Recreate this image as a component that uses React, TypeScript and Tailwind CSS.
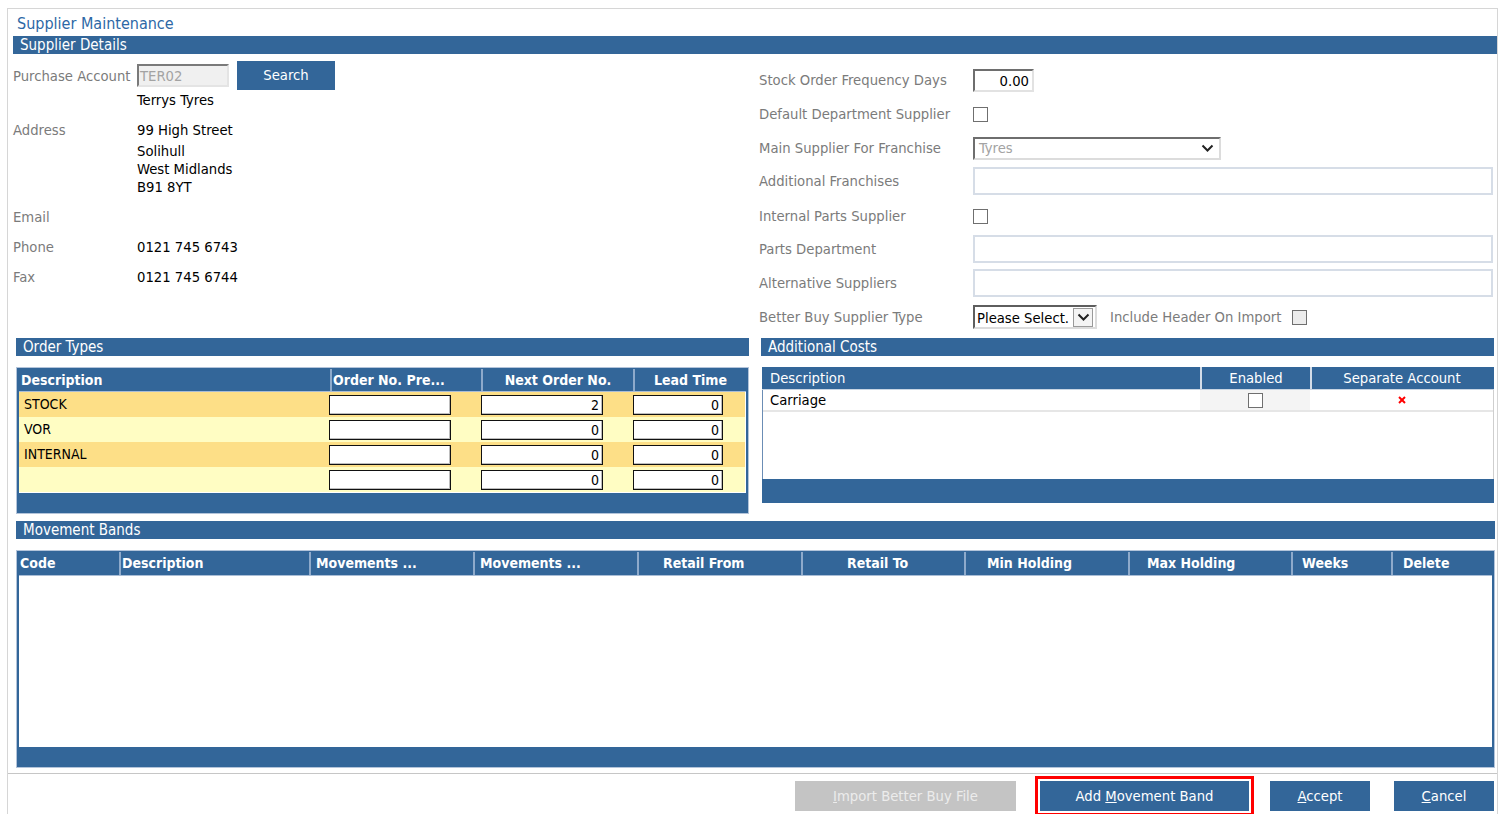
import React from 'react';

const FONT = "font-['DejaVu_Sans_Condensed','Liberation_Sans',sans-serif]";

function Bar({ title }: { title: string }) {
  return (
    <div className="h-[18px] bg-[#336699] text-white text-[15px] leading-[19px] pl-[7px]">{title}</div>
  );
}

function Checkbox({ grey = false }: { grey?: boolean }) {
  return (
    <span
      className={`inline-block w-[15px] h-[15px] border border-[#6f6f6f] ${grey ? 'bg-[#ececec]' : 'bg-white'}`}
    />
  );
}

function Chevron() {
  return (
    <svg width="13" height="9" viewBox="0 0 13 9">
      <polyline points="1.5,1.5 6.5,6.5 11.5,1.5" fill="none" stroke="#222" strokeWidth="2" />
    </svg>
  );
}

function WideBox() {
  return <div className="w-[520px] h-[28px] border-2 border-[#d6dde7] bg-white" />;
}

function RightRow({ label, h, mt, children }: { label: string; h: number; mt: number; children?: React.ReactNode }) {
  return (
    <div className="flex items-center" style={{ height: h, marginTop: mt }}>
      <div className="w-[214px] text-[#7b7b7b]">{label}</div>
      {children}
    </div>
  );
}

function CellInput({ value, w, ml = 0 }: { value: string; w: number; ml?: number }) {
  return (
    <div
      className="h-[20px] bg-white border border-[#111] shadow-[inset_-1px_-1px_0_#bdbdbd] text-right pr-[3px] leading-[18px] text-[14px]"
      style={{ width: w, marginLeft: ml }}
    >
      {value}
    </div>
  );
}

const orderRows = [
  { name: 'STOCK', next: '2', lead: '0', bg: 'bg-[#fddf87]' },
  { name: 'VOR', next: '0', lead: '0', bg: 'bg-[#fffdc3]' },
  { name: 'INTERNAL', next: '0', lead: '0', bg: 'bg-[#fddf87]' },
  { name: '', next: '0', lead: '0', bg: 'bg-[#fffdc3]' },
];

const bandCols = [
  { label: 'Code', w: 100, pl: 1 },
  { label: 'Description', w: 190, pl: 1 },
  { label: 'Movements ...', w: 164, pl: 5 },
  { label: 'Movements ...', w: 164, pl: 5 },
  { label: 'Retail From', w: 164, pl: 24 },
  { label: 'Retail To', w: 163, pl: 44 },
  { label: 'Min Holding', w: 164, pl: 21 },
  { label: 'Max Holding', w: 163, pl: 17 },
  { label: 'Weeks', w: 100, pl: 9 },
  { label: 'Delete', w: 100, pl: 10 },
];

function FirstUnderlined({ text, idx = 0 }: { text: string; idx?: number }) {
  return (
    <>
      {text.slice(0, idx)}
      <span className="underline">{text[idx]}</span>
      {text.slice(idx + 1)}
    </>
  );
}

export default function App() {
  return (
    <div className={`w-[1501px] h-[814px] bg-white pt-[8px] pl-[7px] pr-[3px] overflow-hidden text-[14.7px] text-black ${FONT}`}>
      <div className="h-full border-l border-t border-r border-[#d6d6d6]">
        {/* Title */}
        <div className="h-[27px] flex items-center pt-[2px] pl-[9px] text-[16px] text-[#2d68a6]">Supplier Maintenance</div>

        <div className="pl-[5px]">
          <Bar title="Supplier Details" />

          {/* Supplier details */}
          <div className="h-[284px] flex">
            <div className="w-[746px]">
              <div className="flex items-center h-[29px] mt-[7px]">
                <div className="w-[124px] text-[#7b7b7b] pt-[2px]">Purchase Account</div>
                <div className="w-[92px] h-[23px] bg-[#f0f0f0] border-2 border-t-[#7a7a7a] border-l-[#7a7a7a] border-b-[#e4e4e4] border-r-[#e4e4e4] text-[#a3a3a3] leading-[19px] pl-[1px]">
                  TER02
                </div>
                <button className="ml-[8px] w-[98px] h-[29px] bg-[#336699] text-white">Search</button>
              </div>
              <div className="h-[20px] leading-[20px] pl-[124px]">Terrys Tyres</div>
              <div className="flex mt-[10px]">
                <div className="w-[124px] h-[20px] leading-[20px] text-[#7b7b7b]">Address</div>
                <div>
                  <div className="h-[20px] leading-[20px]">99 High Street</div>
                  <div className="h-[18px] leading-[18px] mt-[2px]">Solihull</div>
                  <div className="h-[18px] leading-[18px]">West Midlands</div>
                  <div className="h-[18px] leading-[18px]">B91 8YT</div>
                </div>
              </div>
              <div className="flex h-[20px] leading-[20px] mt-[11px]">
                <div className="w-[124px] text-[#7b7b7b]">Email</div>
              </div>
              <div className="flex h-[20px] leading-[20px] mt-[10px]">
                <div className="w-[124px] text-[#7b7b7b]">Phone</div>
                <div>0121 745 6743</div>
              </div>
              <div className="flex h-[20px] leading-[20px] mt-[10px]">
                <div className="w-[124px] text-[#7b7b7b]">Fax</div>
                <div>0121 745 6744</div>
              </div>
            </div>

            <div className="flex-1">
              <RightRow label="Stock Order Frequency Days" h={25} mt={14}>
                <div className="w-[61px] h-[23px] bg-white border-2 border-t-[#6e6e6e] border-l-[#6e6e6e] border-b-[#e2e2e2] border-r-[#e2e2e2] text-right pr-[3px] leading-[19px]">
                  0.00
                </div>
              </RightRow>
              <RightRow label="Default Department Supplier" h={20} mt={11}>
                <Checkbox />
              </RightRow>
              <RightRow label="Main Supplier For Franchise" h={25} mt={12}>
                <div className="w-[248px] h-[23px] bg-white border-2 border-t-[#6e6e6e] border-l-[#6e6e6e] border-b-[#dcdcdc] border-r-[#dcdcdc] flex items-center justify-between pl-[4px] pr-[5px] text-[#a3a3a3]">
                  <span>Tyres</span>
                  <Chevron />
                </div>
              </RightRow>
              <RightRow label="Additional Franchises" h={28} mt={6}>
                <WideBox />
              </RightRow>
              <RightRow label="Internal Parts Supplier" h={20} mt={11}>
                <Checkbox />
              </RightRow>
              <RightRow label="Parts Department" h={28} mt={9}>
                <WideBox />
              </RightRow>
              <RightRow label="Alternative Suppliers" h={28} mt={6}>
                <WideBox />
              </RightRow>
              <RightRow label="Better Buy Supplier Type" h={26} mt={7}>
                <div className="w-[124px] h-[24px] bg-white border-2 border-t-[#5e5e5e] border-l-[#5e5e5e] border-b-[#dcdcdc] border-r-[#dcdcdc] flex items-center pl-[2px] pr-[2px]">
                  <span className="flex-1 whitespace-nowrap overflow-hidden pt-[2px]">Please Select.</span>
                  <span className="w-[20px] h-[19px] border border-[#9a9a9a] bg-[#f4f4f4] flex items-center justify-center">
                    <Chevron />
                  </span>
                </div>
                <span className="ml-[13px] text-[#7b7b7b]">Include Header On Import</span>
                <span className="ml-[11px] flex items-center">
                  <Checkbox grey />
                </span>
              </RightRow>
            </div>
          </div>
        </div>

        {/* Order types / additional costs */}
        <div className="pl-[8px] flex gap-[12px]">
          <div className="w-[733px]">
            <Bar title="Order Types" />
            <div className="mt-[11px] border border-[#b3c4da] bg-[#336699] px-[2px] pt-[1px]">
              <div className="flex h-[23px] border-b border-[#a9bdd6] text-white font-bold text-[14px]">
                <div className="w-[311px] pl-[2px] leading-[22px]">Description</div>
                <div className="w-[151px] pl-[1px] border-l-2 border-[#8eaacb] leading-[22px] whitespace-nowrap overflow-hidden">Order No. Pre...</div>
                <div className="w-[152px] border-l-2 border-[#8eaacb] leading-[22px] text-center">Next Order No.</div>
                <div className="w-[113px] border-l-2 border-[#8eaacb] leading-[22px] text-center">Lead Time</div>
              </div>
              <div className="bg-white pr-[1px] pb-[1px]">
                {orderRows.map((r, i) => (
                  <div key={i} className={`flex items-center h-[25px] ${r.bg}`}>
                    <div className="w-[310px] pl-[5px] text-[14px]">{r.name}</div>
                    <div className="w-[151px]">
                      <CellInput value="" w={122} />
                    </div>
                    <div className="w-[152px]">
                      <CellInput value={r.next} w={122} ml={1} />
                    </div>
                    <div className="w-[113px]">
                      <CellInput value={r.lead} w={90} ml={1} />
                    </div>
                  </div>
                ))}
              </div>
              <div className="h-[20px]" />
            </div>
          </div>

          <div className="w-[733px]">
            <Bar title="Additional Costs" />
            <div className="mt-[11px] ml-[1px] w-[732px]">
              <div className="flex h-[23px] bg-[#336699] text-white border-b border-[#c9d5e3]">
                <div className="w-[438px] pl-[8px] leading-[22px]">Description</div>
                <div className="w-[110px] border-l-2 border-[#d3dce8] text-center leading-[22px]">Enabled</div>
                <div className="w-[182px] border-l-2 border-[#d3dce8] text-center leading-[22px]">Separate Account</div>
              </div>
              <div className="h-[89px] bg-white border-l border-[#6b8db5] border-r border-r-[#cfcfcf]">
                <div className="flex h-[22px] border-b-2 border-[#e6e6e6]">
                  <div className="w-[437px] pl-[7px] leading-[20px]">Carriage</div>
                  <div className="w-[110px] bg-[#f4f4f4] flex items-center justify-center">
                    <Checkbox />
                  </div>
                  <div className="w-[183px] flex items-center justify-center">
                    <svg width="8" height="8" viewBox="0 0 8 8">
                      <line x1="1" y1="1" x2="7" y2="7" stroke="#ff0000" strokeWidth="2" />
                      <line x1="7" y1="1" x2="1" y2="7" stroke="#ff0000" strokeWidth="2" />
                    </svg>
                  </div>
                </div>
              </div>
              <div className="h-[24px] bg-[#336699]" />
            </div>
          </div>
        </div>

        {/* Movement bands */}
        <div className="pl-[8px] pr-[2px] mt-[7px]">
          <Bar title="Movement Bands" />
          <div className="mt-[11px] border border-[#b3c4da] bg-[#336699] px-[2px] pt-[1px]">
            <div className="flex h-[24px] border-b border-[#a9bdd6] text-white font-bold text-[14px]">
              {bandCols.map((c, i) => (
                <div
                  key={i}
                  className={`leading-[23px] whitespace-nowrap overflow-hidden ${i > 0 ? 'border-l-2 border-[#8eaacb]' : ''}`}
                  style={{ width: c.w, paddingLeft: c.pl }}
                >
                  {c.label}
                </div>
              ))}
            </div>
            <div className="h-[171px] bg-white" />
            <div className="h-[20px]" />
          </div>
        </div>

        <div className="mt-[5px] border-t border-[#c6c6c6]" />

        {/* Buttons */}
        <div className="flex justify-end pr-[3px] mt-[7px]">
          <button className="w-[221px] h-[30px] bg-[#c4c4c4] text-[#ececec]">
            <FirstUnderlined text="Import Better Buy File" />
          </button>
          <button className="ml-[24px] w-[209px] h-[30px] bg-[#336699] text-white outline outline-[3px] outline-[#ff0000] outline-offset-2">
            <FirstUnderlined text="Add Movement Band" idx={4} />
          </button>
          <button className="ml-[21px] w-[100px] h-[30px] bg-[#336699] text-white">
            <FirstUnderlined text="Accept" />
          </button>
          <button className="ml-[24px] w-[100px] h-[30px] bg-[#336699] text-white">
            <FirstUnderlined text="Cancel" />
          </button>
        </div>
      </div>
    </div>
  );
}
